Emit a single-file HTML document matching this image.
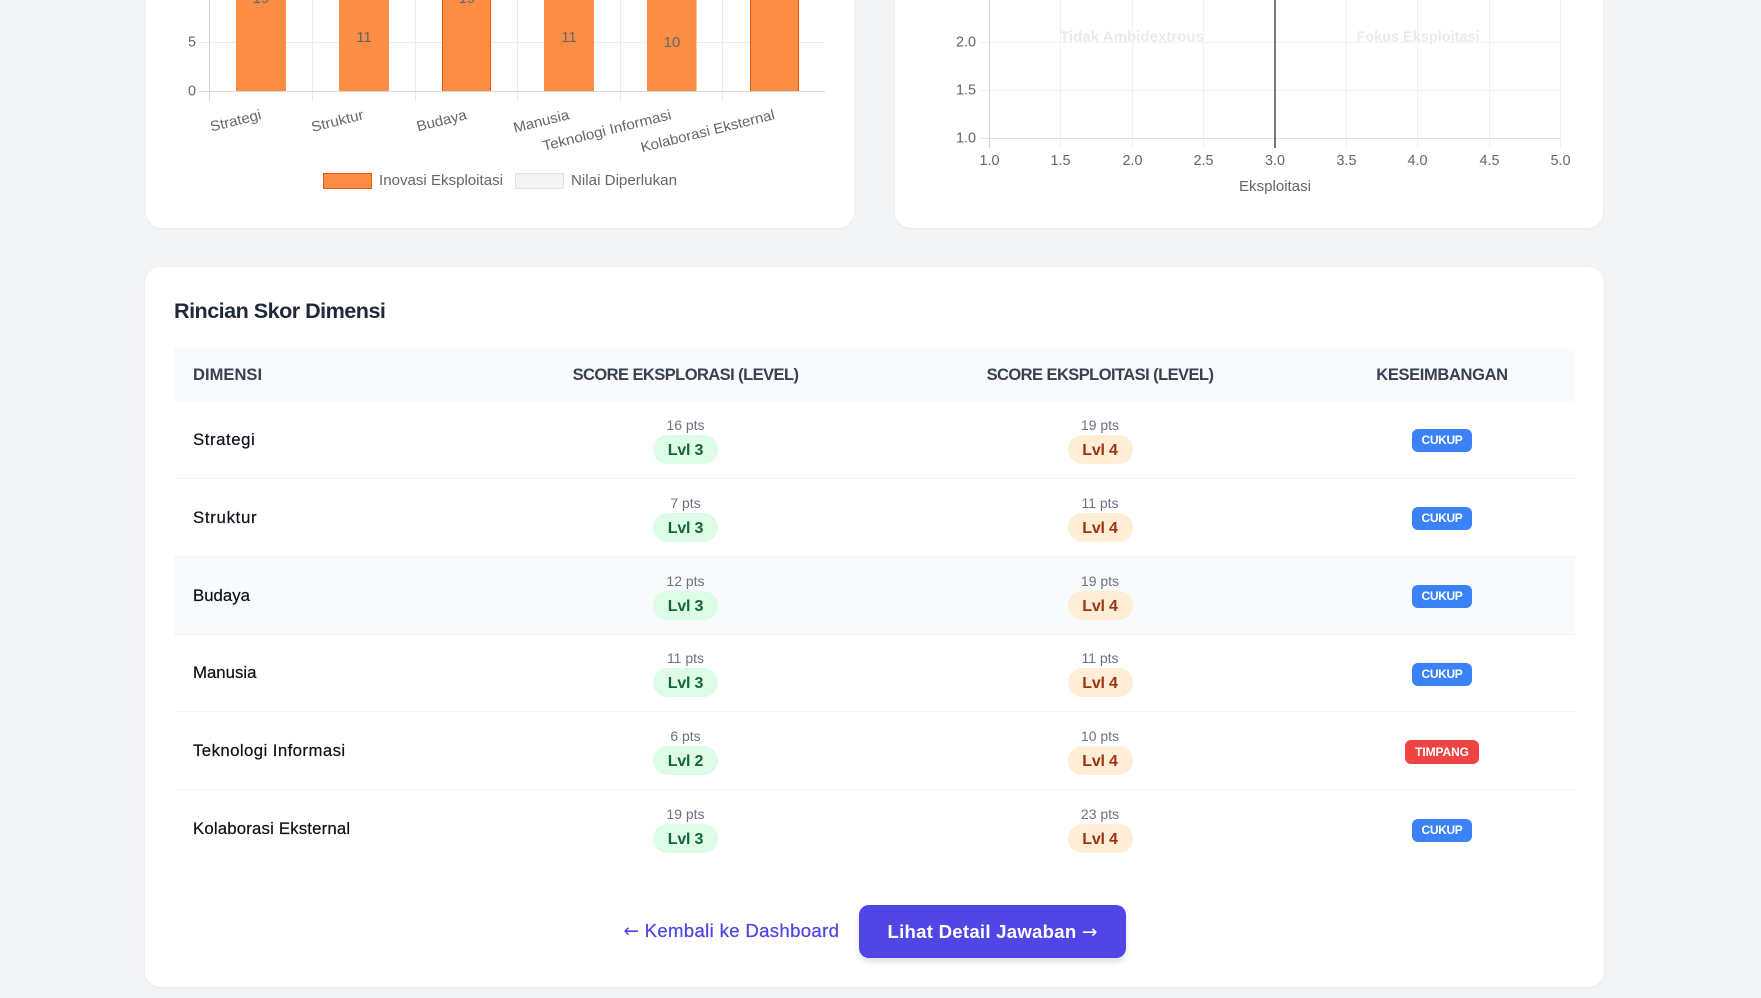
<!DOCTYPE html>
<html lang="id">
<head>
<meta charset="utf-8">
<title>Rincian Skor Dimensi</title>
<style>
html,body{margin:0;padding:0;width:1761px;height:998px;overflow:hidden;background:#f3f4f6;font-family:"Liberation Sans",sans-serif;}
.card{position:absolute;background:#fff;border-radius:16px;box-shadow:0 1px 3px rgba(0,0,0,.05);}
#c1{left:145.5px;top:-100px;width:708.5px;height:327.5px;}
#c2{left:895px;top:-100px;width:708px;height:327.5px;}
#c3{left:145px;top:267px;width:1459px;height:720px;}
svg.chart{position:absolute;left:0;top:0;}
svg text{font-family:"Liberation Sans",sans-serif;}
h2{position:absolute;left:29px;top:30px;margin:0;font-size:21.6px;line-height:27px;font-weight:700;color:#1f2937;letter-spacing:-.53px;white-space:nowrap;}
table{position:absolute;left:29px;top:81px;width:1401px;border-collapse:separate;border-spacing:0;table-layout:fixed;}
th{height:53px;box-sizing:border-box;padding:2px 0 0;background:#f9fafb;color:#374151;font-size:16.5px;font-weight:700;text-align:center;letter-spacing:-.56px;}
th:first-child{letter-spacing:.05px;}
th:last-child{letter-spacing:-.35px;}
th:first-child,td:first-child{text-align:left;padding-left:19px;}
td{height:78px;box-sizing:border-box;padding:0;border-bottom:1px solid #f3f4f6;text-align:center;vertical-align:middle;}
tr.s td{height:77px;}
tr:last-child td{border-bottom:0;}
tr.h td{background:#f9fafb;}
td:first-child{font-size:16.8px;color:#0b0f19;-webkit-text-stroke:.2px #0b0f19;}
.pts{display:block;font-size:14px;line-height:18px;color:#6b7280;margin-top:-1px;position:relative;top:0;}
.pill{display:block;width:65px;height:29px;line-height:31px;margin:0 auto;border-radius:14.5px;font-size:16px;font-weight:700;letter-spacing:-.2px;position:relative;top:1px;}
.g{background:#dcfce7;color:#166534;}
.o{background:#ffedd5;color:#9a3412;}
.b{display:inline-block;height:23px;line-height:23px;padding:0;border-radius:6px;color:#fff;font-size:12px;font-weight:700;position:relative;top:1px;text-align:center;}
.cu{background:#3b82f6;width:60px;letter-spacing:-.35px;}
.ti{background:#ef4444;width:74px;height:24px;line-height:24px;top:1px;letter-spacing:-.1px;}
.ar{font-family:"DejaVu Sans",sans-serif;font-weight:400;letter-spacing:0;-webkit-text-stroke:0;}
.link{position:absolute;left:478.5px;top:639px;width:220px;height:50px;line-height:50px;color:#4f46e5;font-size:18.6px;font-weight:400;white-space:nowrap;text-decoration:none;letter-spacing:.33px;-webkit-text-stroke:.25px #4f46e5;}
.btn{position:absolute;left:714px;top:638px;width:267px;height:53px;line-height:53px;background:#4f46e5;border-radius:10px;color:#fff;font-size:18.6px;font-weight:700;text-align:center;white-space:nowrap;box-shadow:0 4px 6px rgba(0,0,0,.12);text-decoration:none;letter-spacing:.25px;}
</style>
</head>
<body>
<div class="card" id="c1"></div>
<div class="card" id="c2"></div>

<svg class="chart" width="1761" height="240" viewBox="0 0 1761 240">
  <!-- left chart grid -->
  <g stroke="#ececec" stroke-width="1" fill="none">
    <path d="M199 42.500H825"/>
    <path d="M312.500 0V101M415.500 0V101M517.500 0V101M620.500 0V101M722.500 0V101"/>
  </g>
  <path d="M209.500 0V101" stroke="#d2d2d2"/>
  <path d="M199 91.500H825" stroke="#d8d8d8" stroke-width="1"/>
  <!-- bars -->
  <g fill="#fb8d45">
    <rect x="236" y="-5" width="50" height="96"/>
    <rect x="339" y="-5" width="50" height="96"/>
    <rect x="442" y="-5" width="49" height="96"/>
    <rect x="544" y="-5" width="50" height="96"/>
    <rect x="647" y="-5" width="49.500" height="96"/>
    <rect x="750" y="-5" width="49" height="96"/>
  </g>
  <path d="M442.500 0V91M490.500 0V91M750.500 0V91M798.500 0V91" stroke="#ea580c" stroke-width="1" fill="none"/>
  <g fill="#666" font-size="15" text-anchor="middle">
    <text x="261" y="3">19</text>
    <text x="364" y="42">11</text>
    <text x="467" y="3">19</text>
    <text x="569" y="42">11</text>
    <text x="672" y="47">10</text>
  </g>
  <g fill="#666" font-size="14.400" text-anchor="end">
    <text x="196" y="46.500">5</text>
    <text x="196" y="95.500">0</text>
  </g>
  <g fill="#666" font-size="14.400" text-anchor="end">
    <text transform="translate(262,119) rotate(-14)" textLength="52" lengthAdjust="spacingAndGlyphs">Strategi</text>
    <text transform="translate(364.500,119) rotate(-14)" textLength="53.500" lengthAdjust="spacingAndGlyphs">Struktur</text>
    <text transform="translate(467.500,119) rotate(-14)" textLength="51" lengthAdjust="spacingAndGlyphs">Budaya</text>
    <text transform="translate(570,119) rotate(-14)" textLength="57" lengthAdjust="spacingAndGlyphs">Manusia</text>
    <text transform="translate(672,119) rotate(-14)" textLength="132" lengthAdjust="spacingAndGlyphs">Teknologi Informasi</text>
    <text transform="translate(775.500,119) rotate(-14)" textLength="137.500" lengthAdjust="spacingAndGlyphs">Kolaborasi Eksternal</text>
  </g>
  <!-- legend -->
  <rect x="323.500" y="173.500" width="48" height="15" fill="#fb8d45" stroke="#ea580c" stroke-width="1"/>
  <text x="379" y="185" font-size="14.400" fill="#666" textLength="124" lengthAdjust="spacingAndGlyphs">Inovasi Eksploitasi</text>
  <rect x="515.500" y="173.500" width="48" height="15" fill="#f3f4f6" stroke="#dfe2e7" stroke-width="1"/>
  <text x="571" y="185" font-size="14.400" fill="#666" textLength="106" lengthAdjust="spacingAndGlyphs">Nilai Diperlukan</text>

  <!-- right chart grid -->
  <g stroke="#f1f1f1" stroke-width="1" fill="none">
    <path d="M980 42.500H1560.500M980 90.500H1560.500"/>
    <path d="M1060.500 0V148M1132.500 0V148M1203.500 0V148M1346.500 0V148M1417.500 0V148M1489.500 0V148M1560.500 0V148"/>
  </g>
  <path d="M989.500 0V148" stroke="#d4d4d4"/>
  <path d="M980 138.500H1560.500" stroke="#e0e0e0"/>
  <path d="M1275 0V148" stroke="#7a7a7a" stroke-width="2"/>
  <g font-size="14.400" font-weight="700" fill="#e9eaec">
    <text x="1060" y="41.500" textLength="144" lengthAdjust="spacingAndGlyphs">Tidak Ambidextrous</text>
    <text x="1356.500" y="41.500" textLength="123" lengthAdjust="spacingAndGlyphs">Fokus Eksploitasi</text>
  </g>
  <g fill="#666" font-size="14.400" text-anchor="end">
    <text x="976" y="46.500">2.0</text>
    <text x="976" y="94.500">1.5</text>
    <text x="976" y="142.500">1.0</text>
  </g>
  <g fill="#666" font-size="14.400" text-anchor="middle">
    <text x="989.500" y="165">1.0</text>
    <text x="1060.500" y="165">1.5</text>
    <text x="1132.500" y="165">2.0</text>
    <text x="1203.500" y="165">2.5</text>
    <text x="1275" y="165">3.0</text>
    <text x="1346.500" y="165">3.5</text>
    <text x="1417.500" y="165">4.0</text>
    <text x="1489.500" y="165">4.5</text>
    <text x="1560.500" y="165">5.0</text>
    <text x="1275" y="191" textLength="72" lengthAdjust="spacingAndGlyphs">Eksploitasi</text>
  </g>
</svg>

<div class="card" id="c3">
  <h2>Rincian Skor Dimensi</h2>
  <table>
    <colgroup><col style="width:306px"><col style="width:411px"><col style="width:418px"><col style="width:266px"></colgroup>
    <thead>
      <tr><th>DIMENSI</th><th>SCORE EKSPLORASI (LEVEL)</th><th>SCORE EKSPLOITASI (LEVEL)</th><th>KESEIMBANGAN</th></tr>
    </thead>
    <tbody>
      <tr><td style="letter-spacing:.55px">Strategi</td><td><span class="pts">16 pts</span><span class="pill g">Lvl 3</span></td><td><span class="pts">19 pts</span><span class="pill o">Lvl 4</span></td><td><span class="b cu">CUKUP</span></td></tr>
      <tr><td style="letter-spacing:.7px">Struktur</td><td><span class="pts">7 pts</span><span class="pill g">Lvl 3</span></td><td><span class="pts">11 pts</span><span class="pill o">Lvl 4</span></td><td><span class="b cu">CUKUP</span></td></tr>
      <tr class="h"><td>Budaya</td><td><span class="pts">12 pts</span><span class="pill g">Lvl 3</span></td><td><span class="pts">19 pts</span><span class="pill o">Lvl 4</span></td><td><span class="b cu">CUKUP</span></td></tr>
      <tr class="s"><td>Manusia</td><td><span class="pts">11 pts</span><span class="pill g">Lvl 3</span></td><td><span class="pts">11 pts</span><span class="pill o">Lvl 4</span></td><td><span class="b cu">CUKUP</span></td></tr>
      <tr><td style="letter-spacing:.42px">Teknologi Informasi</td><td><span class="pts">6 pts</span><span class="pill g">Lvl 2</span></td><td><span class="pts">10 pts</span><span class="pill o">Lvl 4</span></td><td><span class="b ti">TIMPANG</span></td></tr>
      <tr><td style="letter-spacing:.17px">Kolaborasi Eksternal</td><td><span class="pts">19 pts</span><span class="pill g">Lvl 3</span></td><td><span class="pts">23 pts</span><span class="pill o">Lvl 4</span></td><td><span class="b cu">CUKUP</span></td></tr>
    </tbody>
  </table>
  <a class="link"><span class="ar">←</span> Kembali ke Dashboard</a>
  <a class="btn">Lihat Detail Jawaban <span class="ar">→</span></a>
</div>
</body>
</html>
